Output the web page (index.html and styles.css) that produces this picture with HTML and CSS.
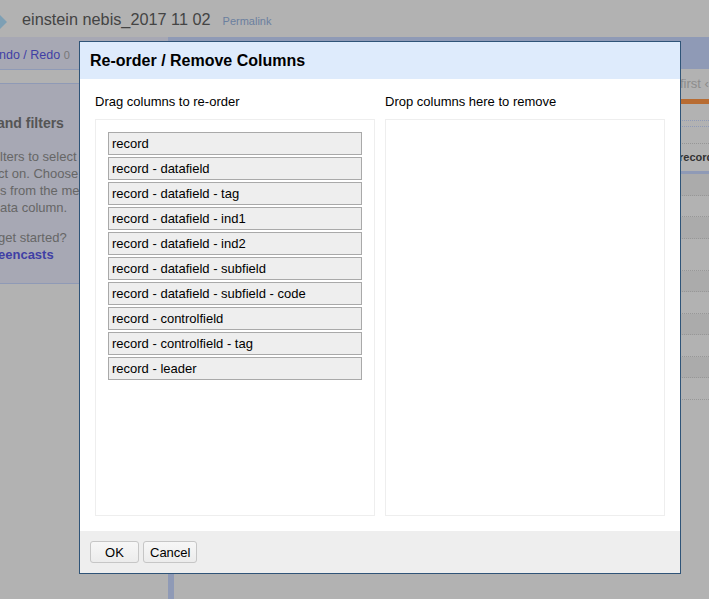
FILE: index.html
```html
<!DOCTYPE html>
<html lang="en">
  <head>
    <meta charset="UTF-8" />
    <meta name="viewport" content="width=device-width, initial-scale=1.0" />
    <title>Re-order / Remove Columns</title>

    <link rel="stylesheet" href="styles.css">
  </head>
  <body>
    <header class="top">
      <svg class="logo" width="8" height="14" viewBox="0 0 8 14">
        <path d="M0 0 L7 7 L0 14 Z" fill="#7d9fb4" />
      </svg>
      <span class="project">einstein nebis_2017 11 02</span>
      <a class="permalink">Permalink</a>
    </header>

    <div class="workspace">
      <aside class="left">
        <div class="history"><span class="link">ndo / Redo</span> <span class="count">0</span></div>
        <div class="subtabs"></div>
        <div class="facets">
          <h2>and filters</h2>
          <p>lters to select<br /><span class="nudge">ct on. Choose</span><br />s from the me<br />ata column.</p>
          <p class="help">get started?<br /><b class="link">eencasts</b></p>
        </div>
      </aside>

      <div class="divider"></div>

      <section class="grid">
        <div class="grid-band"></div>
        <div class="pager">first &#8249;</div>
        <div class="progress"></div>
        <div class="head-row short"></div>
        <div class="head-row tiny"></div>
        <div class="head-row short"></div>
        <div class="head-row name">record</div>
        <ul class="rows">
          <li class="odd"></li>
          <li></li>
          <li class="odd"></li>
          <li class="tall"></li>
          <li class="odd"></li>
          <li></li>
          <li class="odd"></li>
          <li></li>
          <li class="odd"></li>
          <li></li>
        </ul>
      </section>
    </div>

    <div class="dialog">
      <div class="dialog-title">Re-order / Remove Columns</div>
      <div class="dialog-body">
        <div class="column">
          <div class="column-label">Drag columns to re-order</div>
          <div class="column-box">
            <div class="item">record</div>
            <div class="item">record - datafield</div>
            <div class="item">record - datafield - tag</div>
            <div class="item">record - datafield - ind1</div>
            <div class="item">record - datafield - ind2</div>
            <div class="item">record - datafield - subfield</div>
            <div class="item">record - datafield - subfield - code</div>
            <div class="item">record - controlfield</div>
            <div class="item">record - controlfield - tag</div>
            <div class="item">record - leader</div>
          </div>
        </div>
        <div class="column">
          <div class="column-label">Drop columns here to remove</div>
          <div class="column-box"></div>
        </div>
      </div>
      <div class="dialog-footer">
        <button class="ok">OK</button>
        <button>Cancel</button>
      </div>
    </div>
  </body>
</html>
```

FILE: styles.css
```css
html,
body {
  height: 100%;
}

body {
  margin: 0;
  height: 599px;
  overflow: hidden;
  background: #b2b2b2;
  font-family: "Liberation Sans", Arial, sans-serif;
  font-size: 13px;
  color: #000;
}

.top {
  height: 37px;
  display: flex;
  align-items: center;
  position: relative;
}

.logo {
  position: absolute;
  left: 0;
  top: 15px;
}

.project {
  margin-left: 22px;
  margin-top: 1px;
  font-size: 16.25px;
  color: #444;
}

.permalink {
  margin-left: 12px;
  margin-top: 5px;
  font-size: 11px;
  color: #6b7f9f;
}

.workspace {
  display: flex;
  height: 562px;
}

.left {
  width: 168px;
}

.history {
  height: 32px;
  margin-left: -1px;
  line-height: 37px;
  background: #a7a8b4;
  border-bottom: 1px solid #8f9ab6;
  white-space: nowrap;
  font-size: 12.5px;
}

.link {
  color: #3f3fa5;
}

.count {
  color: #777;
  font-size: 11px;
}

.subtabs {
  height: 13px;
  border-bottom: 1px solid #8f9ab6;
}

.facets {
  height: 199px;
  background: #a7a8b4;
  border-bottom: 1px solid #8f9ab6;
  color: #666;
  white-space: nowrap;
  overflow: hidden;

  h2 {
    margin: 30px 0 0 -3px;
    font-size: 14px;
    line-height: 18px;
    color: #555;
  }

  p {
    margin: 16px 0 0;
    line-height: 17px;
  }

  .help {
    margin: 13px 0 0 -2px;
  }
}

.nudge {
  margin-left: -2px;
}

.divider {
  width: 6px;
  background: #8f9ab6;
}

.grid {
  flex: 1;
  min-width: 0;
}

.grid-band {
  height: 32px;
  background: #8f9ab6;
}

.pager {
  height: 30px;
  padding-left: 506px;
  line-height: 30px;
  font-size: 13px;
  color: #8c8c8c;
  white-space: nowrap;
}

.progress {
  height: 5px;
  background: #b86c32;
}

.head-row {
  border-bottom: 1px dotted #8f9ab6;
}

.short {
  height: 16px;
}

.tiny {
  height: 5px;
}

.head-row + .short {
  border-bottom-color: #969696;
}

.name {
  height: 27px;
  padding-left: 505px;
  line-height: 27px;
  font-size: 11px;
  font-weight: bold;
  color: #333;
  white-space: nowrap;
  border-bottom: 3px solid #8f9ab6;
}

.rows {
  list-style: none;
  margin: 0;
  padding: 0;

  li {
    height: 21.5px;
    box-sizing: border-box;
    border-bottom: 1px dotted #979797;
  }

  .odd {
    background: #ababab;
  }

  .tall {
    height: 32px;
  }
}

.dialog {
  position: absolute;
  left: 79px;
  top: 41px;
  width: 600px;
  background: #fff;
  border: 1px solid #2f5478;
}

.dialog-title {
  height: 37px;
  padding-left: 10px;
  line-height: 37px;
  background: #deebfc;
  font-size: 16px;
  font-weight: bold;
}

.dialog-body {
  height: 452px;
  box-sizing: border-box;
  padding: 15px 15px 0;
  display: flex;
  gap: 10px;
}

.column {
  width: 280px;
}

.column-label {
  height: 25px;
  line-height: 15px;
}

.column-box {
  height: 397px;
  box-sizing: border-box;
  padding: 12px;
  border: 1px solid #eee;
}

.item {
  height: 23px;
  box-sizing: border-box;
  margin-bottom: 2px;
  padding-left: 3px;
  line-height: 21px;
  background: #eee;
  border: 1px solid #a9a9a9;
}

.dialog-footer {
  height: 42px;
  box-sizing: border-box;
  padding: 10px 10px 0;
  background: #eee;
  display: flex;
  align-items: flex-start;
  gap: 4px;
}

button {
  height: 22px;
  padding: 0 6px;
  font-family: inherit;
  font-size: 13px;
  color: #000;
  background: linear-gradient(#f7f7f7, #ececec);
  border: 1px solid #c6c6c6;
  border-radius: 3px;
}

.ok {
  width: 49px;
}
```
